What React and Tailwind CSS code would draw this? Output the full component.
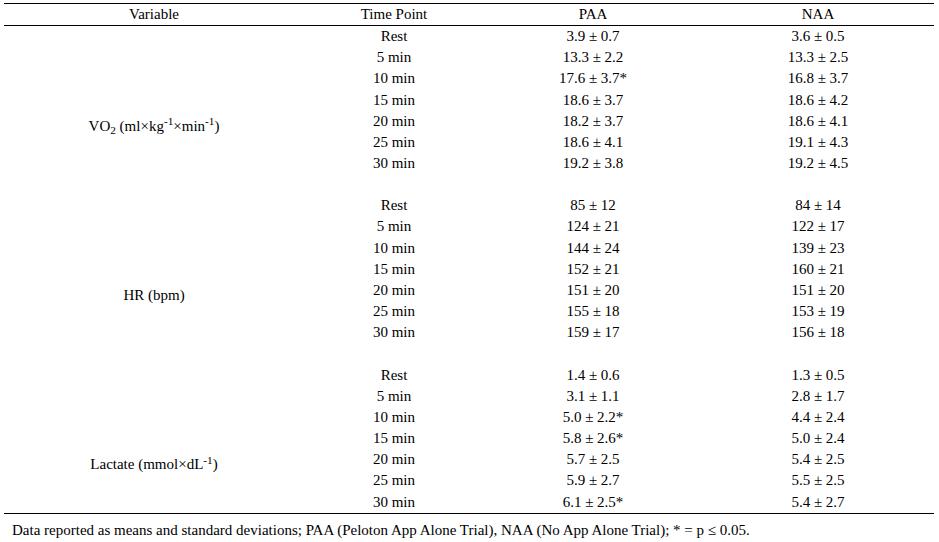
const groups = [
  {
    label: (
      <>
        VO<sub>2</sub> (ml×kg<sup>-1</sup>×min<sup>-1</sup>)
      </>
    ),
    rows: [
      ['3.9 ± 0.7', '3.6 ± 0.5'],
      ['13.3 ± 2.2', '13.3 ± 2.5'],
      ['17.6 ± 3.7*', '16.8 ± 3.7'],
      ['18.6 ± 3.7', '18.6 ± 4.2'],
      ['18.2 ± 3.7', '18.6 ± 4.1'],
      ['18.6 ± 4.1', '19.1 ± 4.3'],
      ['19.2 ± 3.8', '19.2 ± 4.5'],
    ],
  },
  {
    label: 'HR (bpm)',
    rows: [
      ['85 ± 12', '84 ± 14'],
      ['124 ± 21', '122 ± 17'],
      ['144 ± 24', '139 ± 23'],
      ['152 ± 21', '160 ± 21'],
      ['151 ± 20', '151 ± 20'],
      ['155 ± 18', '153 ± 19'],
      ['159 ± 17', '156 ± 18'],
    ],
  },
  {
    label: (
      <>
        Lactate (mmol×dL<sup>-1</sup>)
      </>
    ),
    rows: [
      ['1.4 ± 0.6', '1.3 ± 0.5'],
      ['3.1 ± 1.1', '2.8 ± 1.7'],
      ['5.0 ± 2.2*', '4.4 ± 2.4'],
      ['5.8 ± 2.6*', '5.0 ± 2.4'],
      ['5.7 ± 2.5', '5.4 ± 2.5'],
      ['5.9 ± 2.7', '5.5 ± 2.5'],
      ['6.1 ± 2.5*', '5.4 ± 2.7'],
    ],
  },
];

const times = ['Rest', '5 min', '10 min', '15 min', '20 min', '25 min', '30 min'];

const cols = 'grid grid-cols-[300px_180px_218px_232px]';

function Group({ group, last }) {
  return (
    <div className={`${cols} auto-rows-[21.17px]`}>
      <div className="col-start-1 row-start-5 flex items-center justify-center pt-[10px]">
        <span>{group.label}</span>
      </div>
      {group.rows.map((r, i) => (
        <div key={i} className="contents">
          <div className="col-start-2 flex items-center justify-center" style={{ gridRowStart: i + 1 }}>
            {times[i]}
          </div>
          <div className="col-start-3 flex items-center justify-center" style={{ gridRowStart: i + 1 }}>
            {r[0]}
          </div>
          <div className="col-start-4 flex items-center justify-center" style={{ gridRowStart: i + 1 }}>
            {r[1]}
          </div>
        </div>
      ))}
      {!last && <div className="col-span-4 row-start-8" />}
    </div>
  );
}

export default function App() {
  return (
    <div
      className="min-h-screen bg-white text-black text-[15px] leading-[21px]"
      style={{ fontFamily: '"Liberation Serif", "Times New Roman", serif' }}
    >
      <div className="ml-[4px] pt-[3px] w-[930px]">
        <div className={`${cols} h-[23px] border-t border-b border-black items-center text-center`}>
          <div>Variable</div>
          <div>Time Point</div>
          <div>PAA</div>
          <div>NAA</div>
        </div>
        <div className="border-b border-black">
          {groups.map((g, i) => (
            <Group key={i} group={g} last={i === groups.length - 1} />
          ))}
        </div>
        <p className="pt-[6px] pl-[8px]">
          Data reported as means and standard deviations; PAA (Peloton App Alone Trial), NAA (No App Alone
          Trial); * = p ≤ 0.05.
        </p>
      </div>
    </div>
  );
}
